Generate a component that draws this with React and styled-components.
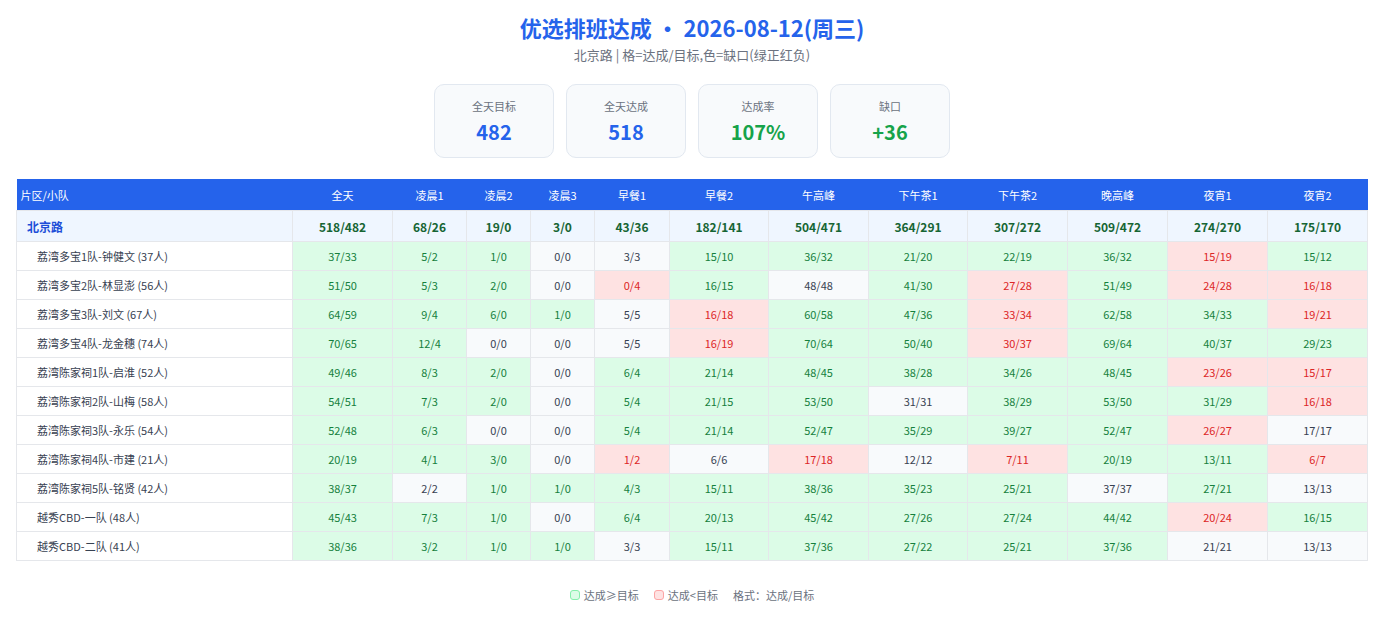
import React from "react";
import styled, { createGlobalStyle } from "styled-components";

const GlobalStyle = createGlobalStyle`
  body {
    margin: 0;
    background: #ffffff;
    font-family: "Noto Sans CJK SC", "Noto Sans", sans-serif;
    color: #374151;
  }
`

const Page = styled.div`
  padding: 12px 16px 0 16px;
`

const Title = styled.h1`
  margin: 0;
  text-align: center;
  font-size: 22px;
  line-height: 30px;
  font-weight: 700;
  color: #2563eb;
`

const Subtitle = styled.div`
  margin-top: 4px;
  text-align: center;
  font-size: 13px;
  line-height: 18px;
  color: #6b7280;
`

const Cards = styled.div`
  display: flex;
  justify-content: center;
  gap: 12px;
  margin: 20px 0 21px 0;
`

const Card = styled.div`
  width: 120px;
  height: 74px;
  box-sizing: border-box;
  border: 1px solid #e2e8f0;
  border-radius: 10px;
  background: #f8fafc;
  display: flex;
  flex-direction: column;
  align-items: center;
  padding-top: 13px;
`

const CardLabel = styled.div`
  font-size: 11px;
  line-height: 16px;
  color: #6b7280;
`

const CardValue = styled.div`
  margin-top: 4px;
  font-size: 20px;
  line-height: 28px;
  font-weight: 700;
  color: ${p => p.green ? '#16a34a' : '#2563eb'};
`

const Table = styled.table`
  width: 100%;
  border-collapse: collapse;
  table-layout: fixed;
  font-size: 11px;
`

const Th = styled.th`
  background: #2563eb;
  color: #ffffff;
  font-weight: 400;
  height: 31px;
  padding: 0 4px;
  text-align: ${p => p.left ? 'left' : 'center'};
`

const SumRow = styled.tr`
  background: #eff6ff;
  height: 31px;
`

const SumLabel = styled.td`
  padding-left: 10px;
  font-size: 12px;
  font-weight: 700;
  color: #1d4ed8;
  border: 1px solid #e5e7eb;
`

const SumCell = styled.td`
  text-align: center;
  font-size: 12px;
  font-weight: 700;
  color: #166534;
  border: 1px solid #e5e7eb;
`

const Row = styled.tr`
  height: 29px;
`

const TeamLabel = styled.td`
  padding-left: 20px;
  color: #374151;
  background: #ffffff;
  border: 1px solid #e5e7eb;
  white-space: nowrap;
`

const palette = {
  up: { bg: '#dcfce7', fg: '#15803d' },
  down: { bg: '#fee2e2', fg: '#dc2626' },
  even: { bg: '#f8fafc', fg: '#374151' },
}

const Cell = styled.td`
  text-align: center;
  border: 1px solid #e5e7eb;
  background: ${p => palette[p.kind].bg};
  color: ${p => palette[p.kind].fg};
`

const Legend = styled.div`
  display: flex;
  justify-content: center;
  align-items: center;
  gap: 15px;
  margin-top: 26px;
  font-size: 11px;
  color: #6b7280;
`

const LegendItem = styled.span`
  display: inline-flex;
  align-items: center;
  gap: 4px;
`

const Swatch = styled.span`
  width: 8px;
  height: 8px;
  border-radius: 3px;
  background: ${p => p.red ? '#fee2e2' : '#dcfce7'};
  border: 1px solid ${p => p.red ? '#fca5a5' : '#86efac'};
`

const columns = ['全天', '凌晨1', '凌晨2', '凌晨3', '早餐1', '早餐2', '午高峰', '下午茶1', '下午茶2', '晚高峰', '夜宵1', '夜宵2']
const widths = [100, 74, 64, 64, 75, 99, 100, 99, 100, 100, 100, 100]

const summary = ['518/482', '68/26', '19/0', '3/0', '43/36', '182/141', '504/471', '364/291', '307/272', '509/472', '274/270', '175/170']

const teams = [
  ['荔湾多宝1队-钟健文 (37人)', '37/33 5/2 1/0 0/0 3/3 15/10 36/32 21/20 22/19 36/32 15/19 15/12'],
  ['荔湾多宝2队-林显澎 (56人)', '51/50 5/3 2/0 0/0 0/4 16/15 48/48 41/30 27/28 51/49 24/28 16/18'],
  ['荔湾多宝3队-刘文 (67人)', '64/59 9/4 6/0 1/0 5/5 16/18 60/58 47/36 33/34 62/58 34/33 19/21'],
  ['荔湾多宝4队-龙金穗 (74人)', '70/65 12/4 0/0 0/0 5/5 16/19 70/64 50/40 30/37 69/64 40/37 29/23'],
  ['荔湾陈家祠1队-启淮 (52人)', '49/46 8/3 2/0 0/0 6/4 21/14 48/45 38/28 34/26 48/45 23/26 15/17'],
  ['荔湾陈家祠2队-山梅 (58人)', '54/51 7/3 2/0 0/0 5/4 21/15 53/50 31/31 38/29 53/50 31/29 16/18'],
  ['荔湾陈家祠3队-永乐 (54人)', '52/48 6/3 0/0 0/0 5/4 21/14 52/47 35/29 39/27 52/47 26/27 17/17'],
  ['荔湾陈家祠4队-市建 (21人)', '20/19 4/1 3/0 0/0 1/2 6/6 17/18 12/12 7/11 20/19 13/11 6/7'],
  ['荔湾陈家祠5队-铭贤 (42人)', '38/37 2/2 1/0 1/0 4/3 15/11 38/36 35/23 25/21 37/37 27/21 13/13'],
  ['越秀CBD-一队 (48人)', '45/43 7/3 1/0 0/0 6/4 20/13 45/42 27/26 27/24 44/42 20/24 16/15'],
  ['越秀CBD-二队 (41人)', '38/36 3/2 1/0 1/0 3/3 15/11 37/36 27/22 25/21 37/36 21/21 13/13'],
]

const kindOf = (v) => {
  const [done, goal] = v.split('/').map(Number)
  if (done > goal) return 'up'
  if (done < goal) return 'down'
  return 'even'
}

const App = () => {
  return (
    <Page>
      <GlobalStyle/>
      <Title>优选排班达成 · 2026-08-12(周三)</Title>
      <Subtitle>北京路 | 格=达成/目标,色=缺口(绿正红负)</Subtitle>
      <Cards>
        <Card><CardLabel>全天目标</CardLabel><CardValue>482</CardValue></Card>
        <Card><CardLabel>全天达成</CardLabel><CardValue>518</CardValue></Card>
        <Card><CardLabel>达成率</CardLabel><CardValue green>107%</CardValue></Card>
        <Card><CardLabel>缺口</CardLabel><CardValue green>+36</CardValue></Card>
      </Cards>
      <Table>
        <colgroup>
          <col/>
          {widths.map((w, i) => <col key={i} style={{ width: w }}/>)}
        </colgroup>
        <thead>
          <tr>
            <Th left>片区/小队</Th>
            {columns.map(c => <Th key={c}>{c}</Th>)}
          </tr>
        </thead>
        <tbody>
          <SumRow>
            <SumLabel>北京路</SumLabel>
            {summary.map((v, i) => <SumCell key={i}>{v}</SumCell>)}
          </SumRow>
          {teams.map(([name, values]) => (
            <Row key={name}>
              <TeamLabel>{name}</TeamLabel>
              {values.split(' ').map((v, i) => <Cell key={i} kind={kindOf(v)}>{v}</Cell>)}
            </Row>
          ))}
        </tbody>
      </Table>
      <Legend>
        <LegendItem><Swatch/>达成≥目标</LegendItem>
        <LegendItem><Swatch red/>达成&lt;目标</LegendItem>
        <LegendItem>格式：达成/目标</LegendItem>
      </Legend>
    </Page>
  )
}

export default App
